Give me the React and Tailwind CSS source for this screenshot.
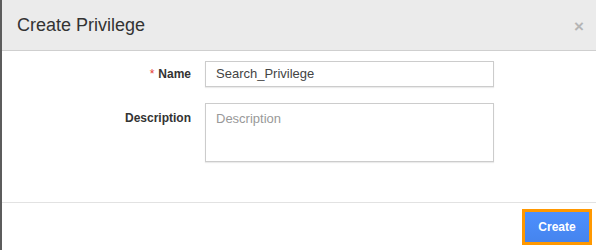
import React from "react";

export default function App() {
  return (
    <div className="flex w-[596px] h-[250px] overflow-hidden" style={{ fontFamily: '"Liberation Sans", Arial, sans-serif' }}>
      <div className="w-[2px] bg-[#5c5c5c] shrink-0" />
      <div className="flex-1 flex flex-col bg-white">
        <div className="h-[51px] bg-[#ebebeb] border-b border-[#cfcfcf] flex items-center justify-between pl-[15px] pr-[12px] shrink-0">
          <h1 className="text-[18px] text-[#333] leading-none pb-[1px]">Create Privilege</h1>
          <span className="text-[#b5b5b5] text-[17px] font-bold leading-none pt-[2px]">×</span>
        </div>
        <div className="flex-1 flex flex-col pt-[10px]">
          <div className="flex items-center">
            <div className="w-[203px] text-right pr-[14px] text-[12px] font-bold text-[#333]">
              <span className="text-[#e53935] font-normal mr-[4px]">*</span>Name
            </div>
            <div className="w-[289px] h-[26px] border border-[#cccccc] shadow-[0_1px_1px_rgba(0,0,0,0.08)] flex items-center pl-[10px] text-[13px] text-[#444]">
              Search_Privilege
            </div>
          </div>
          <div className="flex items-start mt-[16px]">
            <div className="w-[203px] text-right pr-[14px] text-[12px] font-bold text-[#333] pt-[6px]">
              Description
            </div>
            <div className="w-[289px] h-[59px] border border-[#cccccc] shadow-[0_1px_1px_rgba(0,0,0,0.08)] pl-[10px] pt-[5px] text-[13px] text-[#999]">
              Description
            </div>
          </div>
        </div>
        <div className="h-[48px] border-t border-[#e2e2e2] flex items-start justify-end pr-[4px] pt-[6px] shrink-0">
          <button className="w-[70px] h-[36px] border-[3px] border-[#ff9800] flex">
            <span className="flex-1 flex items-center justify-center bg-gradient-to-b from-[#4d90fe] to-[#4584ee] text-white text-[12px] font-bold">
              Create
            </span>
          </button>
        </div>
      </div>
    </div>
  );
}
